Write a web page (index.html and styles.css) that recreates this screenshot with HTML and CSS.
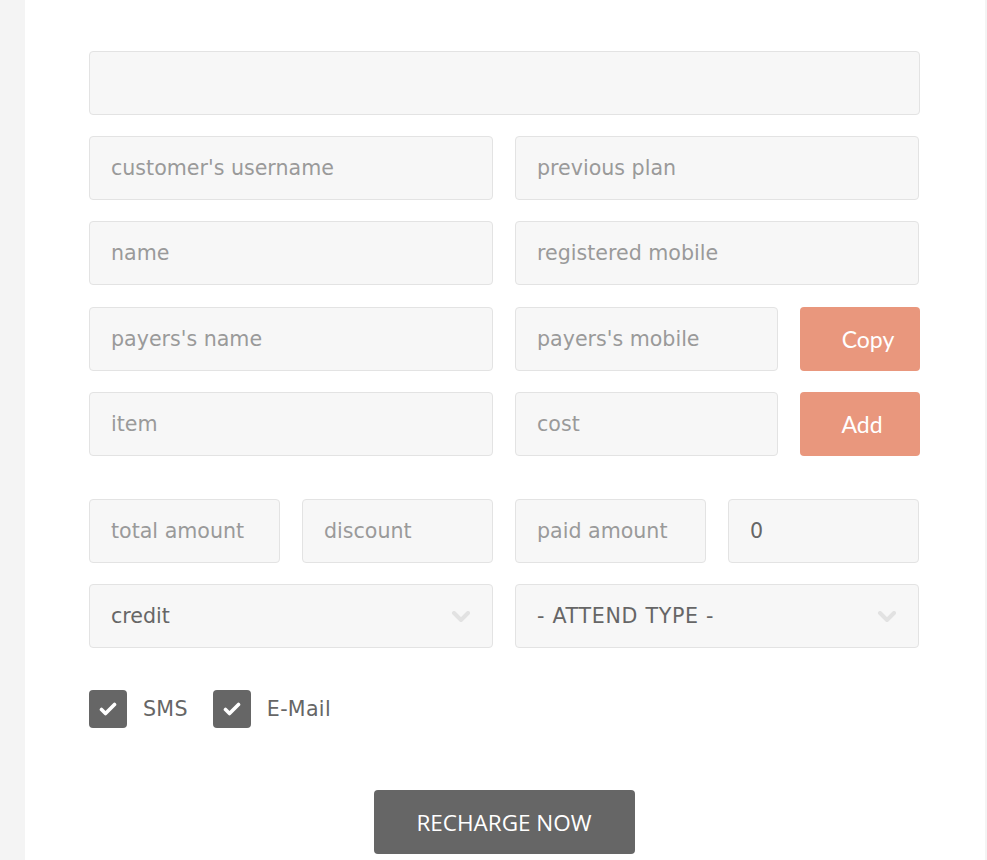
FILE: index.html
```html
<!DOCTYPE html>
<html>
<head>
<meta charset="utf-8">
<link rel="stylesheet" href="styles.css">
</head>
<body>
<div class="page">
  <form class="form">
    <div class="row"><input class="field full" type="text"></div>
    <div class="row two">
      <input class="field" type="text" placeholder="customer's username">
      <input class="field" type="text" placeholder="previous plan">
    </div>
    <div class="row two">
      <input class="field" type="text" placeholder="name">
      <input class="field" type="text" placeholder="registered mobile">
    </div>
    <div class="row two">
      <input class="field" type="text" placeholder="payers's name">
      <div class="split">
        <input class="field" type="text" placeholder="payers's mobile">
        <button type="button" class="btn-accent copy">Copy</button>
      </div>
    </div>
    <div class="row two">
      <input class="field" type="text" placeholder="item">
      <div class="split">
        <input class="field" type="text" placeholder="cost">
        <button type="button" class="btn-accent add">Add</button>
      </div>
    </div>
    <div class="row four spaced">
      <input class="field" type="text" placeholder="total amount">
      <input class="field" type="text" placeholder="discount">
      <input class="field" type="text" placeholder="paid amount">
      <input class="field value" type="text" value="0">
    </div>
    <div class="row two">
      <div class="select">credit<span class="chev"><svg width="20" height="12" viewBox="0 0 20 12"><path d="M3 2l7 7 7-7" fill="none" stroke="#e2e2e2" stroke-width="4" stroke-linecap="round" stroke-linejoin="round"/></svg></span></div>
      <div class="select caps">- ATTEND TYPE -<span class="chev"><svg width="20" height="12" viewBox="0 0 20 12"><path d="M3 2l7 7 7-7" fill="none" stroke="#e2e2e2" stroke-width="4" stroke-linecap="round" stroke-linejoin="round"/></svg></span></div>
    </div>
    <div class="checks">
      <label class="check"><span class="box"><svg width="18" height="14" viewBox="0 0 18 14"><path d="M2.5 7.5l4 4 9-9" fill="none" stroke="#fff" stroke-width="3.6" stroke-linecap="round" stroke-linejoin="round"/></svg></span>SMS</label>
      <label class="check"><span class="box"><svg width="18" height="14" viewBox="0 0 18 14"><path d="M2.5 7.5l4 4 9-9" fill="none" stroke="#fff" stroke-width="3.6" stroke-linecap="round" stroke-linejoin="round"/></svg></span>E-Mail</label>
    </div>
    <div class="actions"><button type="button" class="btn-main">RECHARGE NOW</button></div>
  </form>
</div>
</body>
</html>
```
FILE: styles.css
```css
* { box-sizing: border-box; }
html, body { margin: 0; padding: 0; }
body {
  background: #f4f4f4;
  font-family: "DejaVu Sans", Verdana, sans-serif;
  height: 860px;
  overflow: hidden;
}
.page {
  margin-left: 25px;
  width: 960px;
  min-height: 860px;
  background: #fff;
  padding: 51px 0 0 64px;
}
.form { width: 831px; }
.row { display: flex; gap: 22px; margin-bottom: 21px; }
.row:nth-child(3) { margin-bottom: 22px; }
.row.two > * { flex: 0 0 404px; }
.row.four { gap: 22px; }
.row.four > .field { flex: 0 0 191px; width: 191px; }
.row.spaced { margin-top: 43px; }
.field {
  display: block;
  height: 64px;
  width: 100%;
  background: #f7f7f7;
  border: 1px solid #e3e3e3;
  border-radius: 4px;
  padding: 0 21px;
  font-family: "DejaVu Sans", Verdana, sans-serif;
  font-size: 20.6px;
  color: #666;
  outline: none;
}
.field.full { width: 831px; }
.field::placeholder { color: #9a9a9a; opacity: 1; }
.split { display: flex; gap: 22px; }
.split .field { flex: 0 0 263px; width: 263px; }
.btn-accent {
  flex: 0 0 120px;
  height: 64px;
  border: 0;
  border-radius: 4px;
  background: #e9977d;
  color: #fff;
  font-family: Lato, "Open Sans", sans-serif;
  font-size: 23px;
  padding: 0;
}
.btn-accent.copy { padding-left: 16px; }
.btn-accent.add { padding-left: 4px; }
.select {
  position: relative;
  height: 64px;
  background: #f7f7f7;
  border: 1px solid #e3e3e3;
  border-radius: 4px;
  padding: 0 21px;
  display: flex;
  align-items: center;
  font-size: 20.6px;
  color: #666;
}
.select.caps { letter-spacing: 0.7px; }
.chev { position: absolute; right: 21px; top: 26px; display: block; line-height: 0; }
.checks { display: flex; gap: 25px; margin-top: 42px; align-items: center; }
.check { display: flex; align-items: center; gap: 16px; font-size: 20.6px; color: #666; letter-spacing: 0.3px; }
.box {
  width: 38px; height: 38px;
  background: #666;
  border-radius: 4px;
  display: flex; align-items: center; justify-content: center;
}
.actions { display: flex; justify-content: center; margin-top: 62px; padding-right: 1px; }
.btn-main {
  width: 261px;
  height: 64px;
  background: #666;
  color: #fff;
  border: 0;
  border-radius: 4px;
  font-family: "Open Sans", sans-serif;
  font-size: 22.5px;
  padding: 0;
}
```
